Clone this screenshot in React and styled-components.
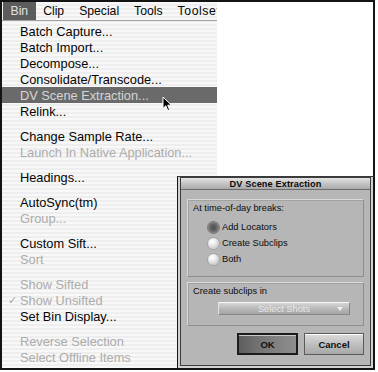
import React from "react";
import styled, { createGlobalStyle } from "styled-components";

const GlobalStyle = createGlobalStyle`
  body {
    margin: 0;
    background: #fff;
  }
`;

const Frame = styled.div`
  position: relative;
  width: 375px;
  height: 370px;
  box-sizing: border-box;
  border: 2px solid #141414;
  display: flex;
  background: #fff;
`;

const MenuColumn = styled.div`
  width: 215px;
  display: flex;
  flex-direction: column;
  overflow: hidden;
  font-family: "Liberation Sans", Arial, sans-serif;
  background: repeating-linear-gradient(#f8f8f8 0 2px, #eeeeee 2px 4px);
`;

const MenuBar = styled.div`
  height: 18px;
  display: flex;
  padding-left: 1px;
  border-bottom: 1px solid #a0a0a0;
  font-size: 12.2px;
`;

const MenuTitle = styled.div`
  display: flex;
  align-items: center;
  padding: 0 7.5px;
  white-space: nowrap;
  color: ${(p) => (p.$open ? "#e2e2e2" : "#050505")};
  background: ${(p) => (p.$open ? "#5c5c5c" : "transparent")};
  letter-spacing: ${(p) => (p.$wide ? "0.6px" : "0")};
`;

const MenuPanel = styled.div`
  display: flex;
  flex-direction: column;
  padding-top: 2px;
  font-size: 12.8px;
`;

const MenuItem = styled.div`
  height: 16px;
  display: flex;
  align-items: center;
  padding-left: 6px;
  white-space: nowrap;
  color: ${(p) => (p.$active ? "#d6d6d6" : p.$disabled ? "#acacac" : "#050505")};
  background: ${(p) => (p.$active ? "#6a6a6a" : "transparent")};
`;

const Mark = styled.span`
  width: 12px;
  font-size: 11px;
  color: #a8a8a8;
`;

const Separator = styled.div`
  height: 9px;
`;

const Cursor = styled.svg`
  position: absolute;
  left: 160px;
  top: 94px;
`;

const Dialog = styled.div`
  position: absolute;
  left: 175px;
  top: 174px;
  right: -2px;
  bottom: -2px;
  display: flex;
  border: 2px solid #141414;
  border-left-width: 1px;
  border-top: 1px solid #3a3a3a;
  padding: 0 2px 2px 2px;
  background: #d2d2d2;
  font-family: "Liberation Sans", Arial, sans-serif;
  font-size: 9.3px;
  color: #0c0c0c;
`;

const Window = styled.div`
  flex: 1;
  display: flex;
  flex-direction: column;
  border: 1px solid #3c3c3c;
  background: #b6b6b6;
`;

const TitleBar = styled.div`
  height: 11px;
  display: flex;
  align-items: center;
  justify-content: center;
  border-bottom: 1px solid #6c6c6c;
  background: linear-gradient(#e4e4e4, #c2c2c2 55%, #a9a9a9);
  font-weight: bold;
  font-size: 9.2px;
  letter-spacing: 0.1px;
`;

const Body = styled.div`
  display: flex;
  flex-direction: column;
  padding: 9px 6px 0 6px;
`;

const Group = styled.div`
  height: ${(p) => p.$h}px;
  box-sizing: border-box;
  margin-bottom: 5px;
  padding: 3px 5px 0 5px;
  border: 1px solid #d9d9d9;
  border-right-color: #8e8e8e;
  border-bottom-color: #8e8e8e;
  box-shadow: inset 1px 1px 0 #a2a2a2;
  display: flex;
  flex-direction: column;
`;

const GroupLabel = styled.div`
  line-height: 10px;
  white-space: nowrap;
`;

const RadioList = styled.div`
  display: flex;
  flex-direction: column;
  margin-top: 6px;
  padding-left: 15px;
`;

const RadioRow = styled.div`
  height: 16px;
  display: flex;
  align-items: center;
  gap: 3px;
`;

const Radio = styled.span`
  width: 11px;
  height: 11px;
  border-radius: 50%;
  background: ${(p) =>
    p.$on
      ? "radial-gradient(circle at 50% 50%, #585858 0 2.5px, #6c6c6c 3.5px, #8e8e8e 100%)"
      : "radial-gradient(circle at 38% 32%, #ffffff 0, #ececec 35%, #b2b2b2 100%)"};
  box-shadow: 0 0 0 1px ${(p) => (p.$on ? "#7a7a7a" : "#a4a4a4")};
`;

const Select = styled.div`
  width: 132px;
  height: 13px;
  box-sizing: border-box;
  margin: 6px 0 0 25px;
  display: flex;
  align-items: center;
  border: 1px solid #868686;
  border-top-color: #f6f6f6;
  border-left-color: #e2e2e2;
  background: linear-gradient(#d6d6d6, #b4b4b4 60%, #a6a6a6);
  color: #e8e8e8;
`;

const SelectText = styled.span`
  flex: 1;
  text-align: center;
  padding-left: 12px;
`;

const Arrow = styled.span`
  width: 0;
  height: 0;
  margin-right: 6px;
  border-left: 3.5px solid transparent;
  border-right: 3.5px solid transparent;
  border-top: 4px solid #f0f0f0;
`;

const Buttons = styled.div`
  display: flex;
  justify-content: flex-end;
  gap: 6px;
  margin-top: 2px;
`;

const Button = styled.div`
  width: ${(p) => p.$w}px;
  height: 22px;
  box-sizing: border-box;
  display: flex;
  align-items: center;
  justify-content: center;
  font-weight: bold;
  font-size: 9.5px;
  border: ${(p) => (p.$default ? "2px solid #1c1c1c" : "1px solid #5a5a5a")};
  box-shadow: inset 0 1px 0 ${(p) => (p.$default ? "#c8c8c8" : "#ffffff")};
  background: ${(p) =>
    p.$default
      ? "linear-gradient(90deg, #5e5e5e, #7c7c7c 50%, #8e8e8e)"
      : "linear-gradient(#dcdcdc, #c0c0c0 50%, #a8a8a8)"};
  color: #111;
`;

const menu = [
  { label: "Batch Capture..." },
  { label: "Batch Import..." },
  { label: "Decompose..." },
  { label: "Consolidate/Transcode..." },
  { label: "DV Scene Extraction...", active: true },
  { label: "Relink..." },
  "sep",
  { label: "Change Sample Rate..." },
  { label: "Launch In Native Application...", disabled: true },
  "sep",
  { label: "Headings..." },
  "sep",
  { label: "AutoSync(tm)" },
  { label: "Group...", disabled: true },
  "sep",
  { label: "Custom Sift..." },
  { label: "Sort", disabled: true },
  "sep",
  { label: "Show Sifted", disabled: true },
  { label: "Show Unsifted", disabled: true, checked: true },
  { label: "Set Bin Display..." },
  "sep",
  { label: "Reverse Selection", disabled: true },
  { label: "Select Offline Items", disabled: true },
];

const App = () => (
  <>
    <GlobalStyle />
    <Frame>
      <MenuColumn>
        <MenuBar>
          <MenuTitle $open>Bin</MenuTitle>
          <MenuTitle>Clip</MenuTitle>
          <MenuTitle>Special</MenuTitle>
          <MenuTitle>Tools</MenuTitle>
          <MenuTitle $wide>Toolset</MenuTitle>
        </MenuBar>
        <MenuPanel>
          {menu.map((item, i) =>
            item === "sep" ? (
              <Separator key={i} />
            ) : (
              <MenuItem key={i} $active={item.active} $disabled={item.disabled}>
                <Mark>{item.checked ? "✓" : ""}</Mark>
                {item.label}
              </MenuItem>
            )
          )}
        </MenuPanel>
      </MenuColumn>

      <Cursor width="12" height="16" viewBox="0 0 12 16">
        <path
          d="M1 1 L1 12.5 L3.8 9.8 L5.8 14.5 L7.6 13.7 L5.7 9.2 L9.4 9.2 Z"
          fill="#000"
          stroke="#fff"
          strokeWidth="1"
          strokeLinejoin="round"
        />
      </Cursor>

      <Dialog>
        <Window>
          <TitleBar>DV Scene Extraction</TitleBar>
          <Body>
            <Group $h={78}>
              <GroupLabel>At time-of-day breaks:</GroupLabel>
              <RadioList>
                <RadioRow>
                  <Radio $on />
                  Add Locators
                </RadioRow>
                <RadioRow>
                  <Radio />
                  Create Subclips
                </RadioRow>
                <RadioRow>
                  <Radio />
                  Both
                </RadioRow>
              </RadioList>
            </Group>
            <Group $h={44}>
              <GroupLabel>Create subclips in</GroupLabel>
              <Select>
                <SelectText>Select Shots</SelectText>
                <Arrow />
              </Select>
            </Group>
            <Buttons>
              <Button $w={61} $default>OK</Button>
              <Button $w={60}>Cancel</Button>
            </Buttons>
          </Body>
        </Window>
      </Dialog>
    </Frame>
  </>
);

export default App;
